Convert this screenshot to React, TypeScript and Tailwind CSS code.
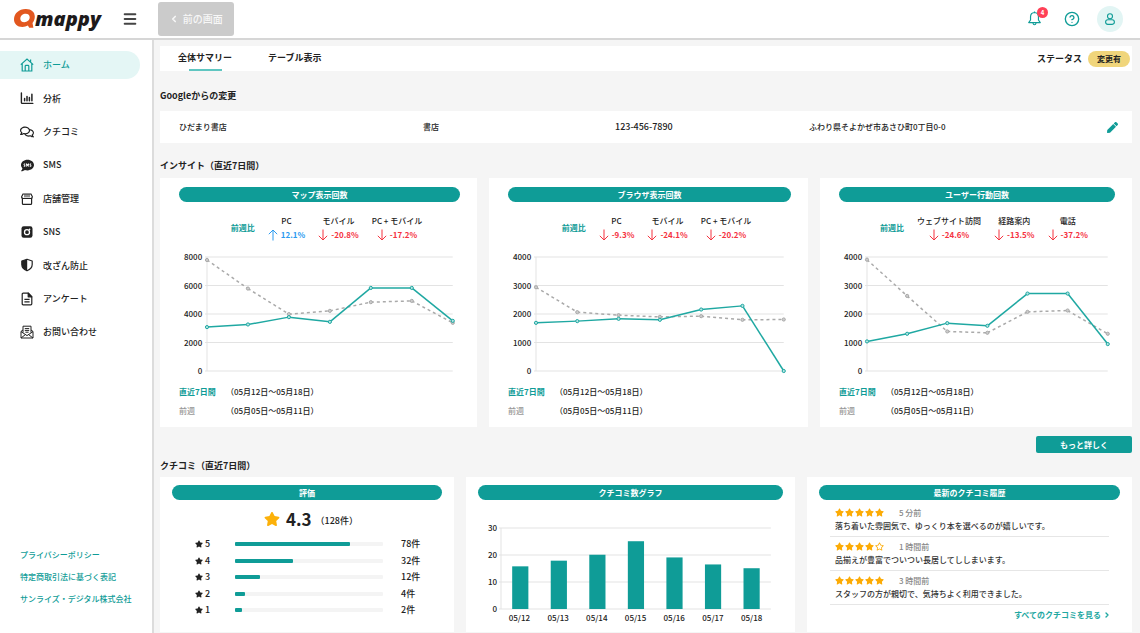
import type { ReactNode } from "react";
import { ChevronLeft, ChevronRight, CircleHelp, Menu } from "lucide-react";
import { FaPen, FaRegComments, FaRegStar, FaSms, FaStar } from "react-icons/fa";

const HomeIcon = () => (
  <svg viewBox="0 0 14 14" className="size-[14px]" fill="none" stroke="currentColor" strokeWidth="1.2">
    <path d="M.8 6.6 7 1l6.2 5.6M2.2 5.6V13h9.6V5.6M10.6 1.4v2.4" />
    <path d="M5.2 13V8.2q0-.8.8-.8h2q.8 0 .8.8V13" />
  </svg>
);

const AnalyticsIcon = () => (
  <svg viewBox="0 0 14 14" className="size-[14px]" fill="none" stroke="currentColor" strokeLinecap="round">
    <path d="M1.4 2v9.6q0 .8.8.8h10.6" strokeWidth="1.4" />
    <path d="M4.6 7.4v2.4M7 5.4v4.4M9.4 6.6v3.2M11.9 3.2v6.6" strokeWidth="1.5" />
  </svg>
);

const StoreIcon = () => (
  <svg viewBox="0 0 14 14" className="size-[14px]" fill="none" stroke="currentColor" strokeWidth="1.2">
    <path d="M2.4 6v5.4q0 1 1 1h7.2q1 0 1-1V6" />
    <path d="M3 2h8l1.4 2.8q0 1.700-1.800 1.700H3.400q-1.800 0-1.800-1.700z" />
    <path d="M5 2.200v3.200M7 2.200v3.200M9 2.200v3.200" strokeWidth="1" />
  </svg>
);

const SnsIcon = () => (
  <svg viewBox="0 0 14 14" className="size-[14px]">
    <rect x="1.5" y="1.2" width="11" height="11.6" rx="2.2" fill="currentColor" />
    <circle cx="7" cy="7.2" r="2.5" fill="none" stroke="#fff" strokeWidth="1.3" />
    <circle cx="9.6" cy="4.4" r=".8" fill="#fff" />
  </svg>
);

const ShieldIcon = () => (
  <svg viewBox="0 0 14 14" className="size-[14px]">
    <path d="M7 1.2 12.2 3v3.6q0 4-5.2 6.2-5.2-2.2-5.2-6.2V3z" fill="none" stroke="currentColor" strokeWidth="1.2" strokeLinejoin="round" />
    <path d="M7.2 1.2 1.8 3v3.6q0 4 5.4 6.2z" fill="currentColor" />
  </svg>
);

const DocumentIcon = () => (
  <svg viewBox="0 0 14 14" className="size-[14px]" fill="none" stroke="currentColor" strokeWidth="1.2" strokeLinejoin="round">
    <path d="M3.2 1.2h5.2l3.4 3.4v7.2q0 1-1 1H3.2q-1 0-1-1V2.2q0-1 1-1z" />
    <path d="M8.2 1.2v3.6h3.6z" fill="currentColor" />
    <path d="M4.4 7.4h5.2M4.4 9.8h5.2" />
  </svg>
);

const MailIcon = () => (
  <svg viewBox="0 0 14 14" className="size-[14px]" fill="none" stroke="currentColor" strokeWidth="1" strokeLinejoin="round">
    <path d="M3 7.6V1.2h8v6.4M3 5 1 6.4V13h12V6.4L11 5" />
    <path d="m1 6.6 6 4 6-4M1 13l4.4-3.4M13 13 8.6 9.6" />
    <path d="M4.8 3.6h4.4M4.8 5.4h4.4M5.4 7.2h3.2" />
  </svg>
);

const BellIcon = () => (
  <svg viewBox="0 0 14 14" className="size-[15px]" fill="none" stroke="currentColor" strokeWidth="1.1" strokeLinejoin="round">
    <path d="M7 1.4q-3.6.2-3.7 4v3L1.6 10.8h10.8l-1.7-2.4v-3q-.1-3.8-3.7-4zM7 .4v1" />
    <path d="M5.6 11.2q.2 1.6 1.4 1.6t1.4-1.6" />
  </svg>
);

const UserIcon = () => (
  <svg viewBox="0 0 14 14" className="size-[14px]" fill="none" stroke="currentColor" strokeWidth="1.1">
    <circle cx="7" cy="4.2" r="2.5" />
    <path d="M4.8 7.8h4.4q2.2.2 2.2 2.3t-2.2 2.3H4.8q-2.2-.1-2.2-2.3t2.2-2.3z" />
  </svg>
);

const LogoMark = () => (
  <svg viewBox="0 0 22 22" className="size-[22px]">
    <path
      fill="#e2571f"
      fillRule="evenodd"
      d="M12.500 1C18 .8 22 4 21.800 8.800c-.1 2.800-1 4.700-2.300 6.200l.9 4.800h-4.200l-1.300-2.200c-1.600.9-3.400 1.400-5.400 1.400C4.200 19 .8 15.700 1 11 1.300 5.200 6 1.200 12.500 1zm.3 4.800c-3 0-5.300 2-5.500 4.600-.1 2.300 1.500 3.800 4 3.800 2.900 0 5.200-1.900 5.400-4.600.1-2.300-1.400-3.800-3.900-3.800z"
    />
  </svg>
);

const navItems: { label: string; icon: ReactNode; active?: boolean }[] = [
  { label: "ホーム", icon: <HomeIcon />, active: true },
  { label: "分析", icon: <AnalyticsIcon /> },
  { label: "クチコミ", icon: <FaRegComments size={14} /> },
  { label: "SMS", icon: <FaSms size={13} /> },
  { label: "店舗管理", icon: <StoreIcon /> },
  { label: "SNS", icon: <SnsIcon /> },
  { label: "改ざん防止", icon: <ShieldIcon /> },
  { label: "アンケート", icon: <DocumentIcon /> },
  { label: "お問い合わせ", icon: <MailIcon /> },
];

const footerLinks = ["プライバシーポリシー", "特定商取引法に基づく表記", "サンライズ・デジタル株式会社"];

type Insight = {
  title: string;
  stats: { label: string; value: number }[];
  max: number;
  current: number[];
  previous: number[];
};

const insights: Insight[] = [
  {
    title: "マップ表示回数",
    stats: [
      { label: "PC", value: 12.1 },
      { label: "モバイル", value: -20.8 },
      { label: "PC + モバイル", value: -17.2 },
    ],
    max: 8000,
    current: [3080, 3265, 3780, 3450, 5830, 5830, 3520],
    previous: [7790, 5785, 3990, 4220, 4830, 4920, 3380],
  },
  {
    title: "ブラウザ表示回数",
    stats: [
      { label: "PC", value: -9.3 },
      { label: "モバイル", value: -24.1 },
      { label: "PC + モバイル", value: -20.2 },
    ],
    max: 4000,
    current: [1690, 1750, 1830, 1796, 2157, 2285, 0],
    previous: [2938, 2064, 1959, 1900, 1924, 1796, 1807],
  },
  {
    title: "ユーザー行動回数",
    stats: [
      { label: "ウェブサイト訪問", value: -24.6 },
      { label: "経路案内", value: -13.5 },
      { label: "電話", value: -37.2 },
    ],
    max: 4000,
    current: [1038, 1306, 1679, 1586, 2717, 2717, 945],
    previous: [3906, 2635, 1388, 1341, 2075, 2122, 1306],
  },
];

const ratings = [
  { star: 5, count: 78, percent: 78 },
  { star: 4, count: 32, percent: 39 },
  { star: 3, count: 12, percent: 17 },
  { star: 2, count: 4, percent: 7 },
  { star: 1, count: 2, percent: 5 },
];

const reviewCounts = [
  { day: "05/12", count: 15.8 },
  { day: "05/13", count: 17.9 },
  { day: "05/14", count: 20.1 },
  { day: "05/15", count: 25.1 },
  { day: "05/16", count: 19.1 },
  { day: "05/17", count: 16.5 },
  { day: "05/18", count: 15.1 },
];

const reviews = [
  { stars: 5, time: "5 分前", text: "落ち着いた雰囲気で、ゆっくり本を選べるのが嬉しいです。" },
  { stars: 4, time: "1 時間前", text: "品揃えが豊富でついつい長居してししまいます。" },
  { stars: 5, time: "3 時間前", text: "スタッフの方が親切で、気持ちよく利用できました。" },
];

function CardTitle({ children }: { children: ReactNode }) {
  return (
    <h3 className="h-[15px] rounded-full bg-[#0f9c97] text-center text-[8px] leading-[15px] font-bold text-white">
      {children}
    </h3>
  );
}

function YAxis({ ticks }: { ticks: number[] }) {
  return (
    <div className="flex flex-col justify-between text-right text-[8px] leading-[8px] font-medium">
      {ticks.map((tick) => (
        <span key={tick}>{tick}</span>
      ))}
    </div>
  );
}

function Series({ values, max, color, dashed }: { values: number[]; max: number; color: string; dashed?: boolean }) {
  const points = values.map((v, i) => ({
    x: `${(i / (values.length - 1)) * 100}%`,
    y: `${(1 - v / max) * 100}%`,
  }));

  return (
    <g stroke={color}>
      {points.slice(1).map((p, i) => (
        <line
          key={i}
          x1={points[i].x}
          y1={points[i].y}
          x2={p.x}
          y2={p.y}
          strokeWidth="1.5"
          strokeDasharray={dashed ? "3 3" : undefined}
        />
      ))}
      {points.map((p, i) => (
        <circle key={i} cx={p.x} cy={p.y} r="1.6" fill={dashed ? "#ccc" : "#b5e4e2"} strokeWidth="1" />
      ))}
    </g>
  );
}

function GridLines({ steps }: { steps: number }) {
  return (
    <g stroke="#e3e3e3">
      {Array.from({ length: steps + 1 }, (_, i) => (
        <line key={i} x1="-2" x2="100%" y1={`${(i / steps) * 100}%`} y2={`${(i / steps) * 100}%`} />
      ))}
      <line x1="0" x2="0" y1="0" y2="100%" />
    </g>
  );
}

function Trend({ value }: { value: number }) {
  const up = value > 0;
  return (
    <span className={`flex items-center gap-[3px] font-bold ${up ? "text-[#2b9bf0]" : "text-[#f5333f]"}`}>
      <svg viewBox="0 0 10 12" className="h-3 w-[10px]" fill="none" stroke="currentColor" strokeWidth="1">
        {up ? <path d="M5 11.5V1M.8 5.2 5 1l4.200 4.200" /> : <path d="M5 .5V11M.8 6.8 5 11l4.200-4.200" />}
      </svg>
      {value.toFixed(1)}%
    </span>
  );
}

function InsightCard({ title, stats, max, current, previous }: Insight) {
  return (
    <article className="min-w-0 bg-white pt-[9px] pr-[17px] pb-[7px] pl-[19px]">
      <CardTitle>{title}</CardTitle>
      <div className="mt-3 flex items-center justify-center gap-[13px] pl-[14px] text-[8px] leading-[14px]">
        <span className="font-bold whitespace-nowrap text-[#0f9c97]">前週比</span>
        {stats.map((stat) => (
          <div key={stat.label} className="flex flex-col items-center whitespace-nowrap">
            <span className="font-medium">{stat.label}</span>
            <Trend value={stat.value} />
          </div>
        ))}
      </div>
      <div className="mt-[11px] flex h-[122px] gap-[5px] pr-[7px] pl-[5px]">
        <YAxis ticks={[4, 3, 2, 1, 0].map((n) => (max / 4) * n)} />
        <svg className="my-1 h-[114px] w-0 flex-1 overflow-visible">
          <GridLines steps={4} />
          <Series values={previous} max={max} color="#aaa" dashed />
          <Series values={current} max={max} color="#1fa8a2" />
        </svg>
      </div>
      <dl className="mt-[7px] grid grid-cols-[47px_auto] text-[8px] leading-[19px]">
        <dt className="font-bold text-[#0f9c97]">直近7日間</dt>
        <dd className="font-medium">（05月12日〜05月18日）</dd>
        <dt className="font-medium text-[#999]">前週</dt>
        <dd className="font-medium">（05月05日〜05月11日）</dd>
      </dl>
    </article>
  );
}

function RatingCard() {
  return (
    <article className="min-w-0 bg-white px-3 pt-2">
      <CardTitle>評価</CardTitle>
      <div className="mt-1.5 flex h-[26px] items-center justify-center pl-2">
        <FaStar size={16} className="text-[#fcb10a]" />
        <span className="ml-1.5 text-[17px] leading-6 font-bold">4.3</span>
        <span className="ml-1 pt-1 text-[9px] font-medium">（128件）</span>
      </div>
      <ul className="mt-1 flex h-[82px] flex-col justify-between pr-[21px] pl-[23px] text-[9px] leading-4 font-medium">
        {ratings.map((row) => (
          <li key={row.star} className="flex items-center">
            <FaStar size={8} />
            <span className="ml-0.5 w-[30px]">{row.star}</span>
            <div className="h-1 flex-1 rounded-[1px] bg-[#f4f4f4]">
              <div className="h-1 rounded-[1px] bg-[#0f9c97]" style={{ width: `${row.percent}%` }} />
            </div>
            <span className="ml-[18px] w-5">{row.count}件</span>
          </li>
        ))}
      </ul>
    </article>
  );
}

function ReviewCountCard() {
  return (
    <article className="min-w-0 bg-white px-3 pt-2">
      <CardTitle>クチコミ数グラフ</CardTitle>
      <div className="mt-6 flex h-[89px] gap-1 pr-3 pl-[10px]">
        <YAxis ticks={[30, 20, 10, 0]} />
        <svg className="my-1 h-[81px] w-0 flex-1 overflow-visible">
          <GridLines steps={3} />
          {reviewCounts.map(({ day, count }, i) => (
            <rect
              key={day}
              x={`${((i + 0.5) / reviewCounts.length) * 100 - 3}%`}
              y={`${(1 - count / 30) * 100}%`}
              width="6%"
              height={`${(count / 30) * 100}%`}
              fill="#0f9c97"
            />
          ))}
        </svg>
      </div>
      <div className="-mt-px flex pr-3 pl-[22px] text-center text-[8px] leading-3 font-medium">
        {reviewCounts.map(({ day }) => (
          <span key={day} className="flex-1">{day}</span>
        ))}
      </div>
    </article>
  );
}

function LatestReviewsCard() {
  return (
    <article className="min-w-0 bg-white px-3 pt-2">
      <CardTitle>最新のクチコミ履歴</CardTitle>
      <div className="mx-[11px] mt-1.5">
        {reviews.map((review) => (
          <div key={review.time} className="mb-[3px] border-b border-[#e6e6e6] px-[5px] pb-[3px] text-[8px] font-medium">
            <div className="flex h-[13px] items-center">
              <div className="flex w-16 gap-px text-[#fcab05]">
                {[1, 2, 3, 4, 5].map((n) =>
                  n <= review.stars ? <FaStar key={n} size={9} /> : <FaRegStar key={n} size={9} />
                )}
              </div>
              <span className="text-[#888]">{review.time}</span>
            </div>
            <p className="leading-[14px] text-[#333]">{review.text}</p>
          </div>
        ))}
        <a href="#reviews" className="flex items-center justify-end text-[8px] leading-[14px] font-bold text-[#1fa8a2]">
          すべてのクチコミを見る
          <ChevronRight size={8} strokeWidth={4} className="-mr-0.5 ml-0.5" />
        </a>
      </div>
    </article>
  );
}

export default function App() {
  return (
    <div className="flex min-h-screen flex-col bg-[#f5f5f5] font-['Noto_Sans_CJK_JP',sans-serif] text-[#222]">
      <header className="flex h-10 items-center border-b-2 border-[#d6d6d6] bg-white pr-[17px] pb-px pl-[13px]">
        <a href="#top" className="flex items-center">
          <LogoMark />
          <span className="font-['Open_Sans',sans-serif] text-[20px] leading-6 font-extrabold text-[#1d1a1b] italic">mappy</span>
        </a>
        <button aria-label="メニュー" className="ml-[21px] text-[#444]">
          <Menu size={16} strokeWidth={3} />
        </button>
        <button className="ml-5 flex h-[34px] w-[76px] items-center justify-center gap-1 rounded-[3px] bg-[#cbcbcb] text-[10px] font-medium text-[#f7f7f7]">
          <ChevronLeft size={10} strokeWidth={4} />
          前の画面
        </button>
        <div className="ml-auto flex items-center text-[#0f9c97]">
          <button aria-label="お知らせ" className="relative">
            <BellIcon />
            <span className="absolute -top-1 -right-[6px] size-[11px] rounded-full bg-[#ff4057] text-center text-[6px] leading-[11px] font-bold text-white">
              4
            </span>
          </button>
          <button aria-label="ヘルプ" className="ml-[22px]">
            <CircleHelp size={16} strokeWidth={2} />
          </button>
          <button aria-label="アカウント" className="ml-[17px] flex size-[26px] items-center justify-center rounded-full bg-[#e2f5f4]">
            <UserIcon />
          </button>
        </div>
      </header>

      <div className="flex flex-1">
        <aside className="flex w-[154px] shrink-0 flex-col justify-between border-r-2 border-[#dcdcdc] bg-white pt-[11px] pb-[23px]">
          <nav className="flex h-[295px] flex-col justify-between">
            {navItems.map((item) => (
              <a
                key={item.label}
                href="#menu"
                className={`mr-3 flex h-7 items-center gap-[9px] rounded-r-full pl-5 text-[9px] font-medium ${
                  item.active ? "bg-[#e4f6f5] text-[#0f9c97]" : ""
                }`}
              >
                <span className="flex w-[14px] justify-center">{item.icon}</span>
                {item.label}
              </a>
            ))}
          </nav>
          <div className="flex flex-col pl-5 text-[8px] leading-[22px] font-medium text-[#0f9c97]">
            {footerLinks.map((label) => (
              <a key={label} href="#about">{label}</a>
            ))}
          </div>
        </aside>

        <main className="flex min-w-0 flex-1 flex-col pt-1.5 pr-2 pb-px pl-1.5">
          <div className="flex h-[25px] items-center justify-between bg-white pr-0.5 pl-[18px] text-[9px] font-bold">
            <div className="flex h-full gap-9">
              <button className="flex h-full flex-col items-center justify-between">
                <span className="leading-6">全体サマリー</span>
                <span className="-mt-px h-0.5 w-[33px] bg-[#5fc6c1]" />
              </button>
              <button className="flex h-full flex-col">
                <span className="leading-6">テーブル表示</span>
              </button>
            </div>
            <div className="flex items-center gap-1.5">
              ステータス
              <span className="h-4 w-[42px] rounded-full bg-[#f0d57b] text-center text-[8px] leading-4">変更有</span>
            </div>
          </div>

          <h2 className="mt-[17px] text-[9px] leading-4 font-bold">Googleからの変更</h2>
          <section className="mt-[7px] grid h-8 grid-cols-[244fr_192fr_194fr_309fr] items-center bg-white pr-[14px] pl-[19px] text-[8px] font-medium">
            <span>ひだまり書店</span>
            <span>書店</span>
            <span className="text-[9px]">123-456-7890</span>
            <div className="flex items-center justify-between">
              ふわり県そよかぜ市あさひ町0丁目0-0
              <button aria-label="編集" className="text-[#0f9c97]">
                <FaPen size={11} />
              </button>
            </div>
          </section>

          <h2 className="mt-[15px] text-[9px] leading-4 font-bold">インサイト（直近7日間）</h2>
          <section className="mt-1 grid grid-cols-[317fr_319fr_312fr] gap-3">
            {insights.map((insight) => (
              <InsightCard key={insight.title} {...insight} />
            ))}
          </section>
          <button className="mt-[9px] h-[17px] w-24 self-end rounded-xs bg-[#0f9c97] text-[8px] font-bold text-white">
            もっと詳しく
          </button>

          <h2 className="mt-[5px] text-[9px] leading-4 font-bold">クチコミ（直近7日間）</h2>
          <section className="mt-[3px] grid flex-1 grid-cols-[294fr_329fr_325fr] gap-3">
            <RatingCard />
            <ReviewCountCard />
            <LatestReviewsCard />
          </section>
        </main>
      </div>
    </div>
  );
}
